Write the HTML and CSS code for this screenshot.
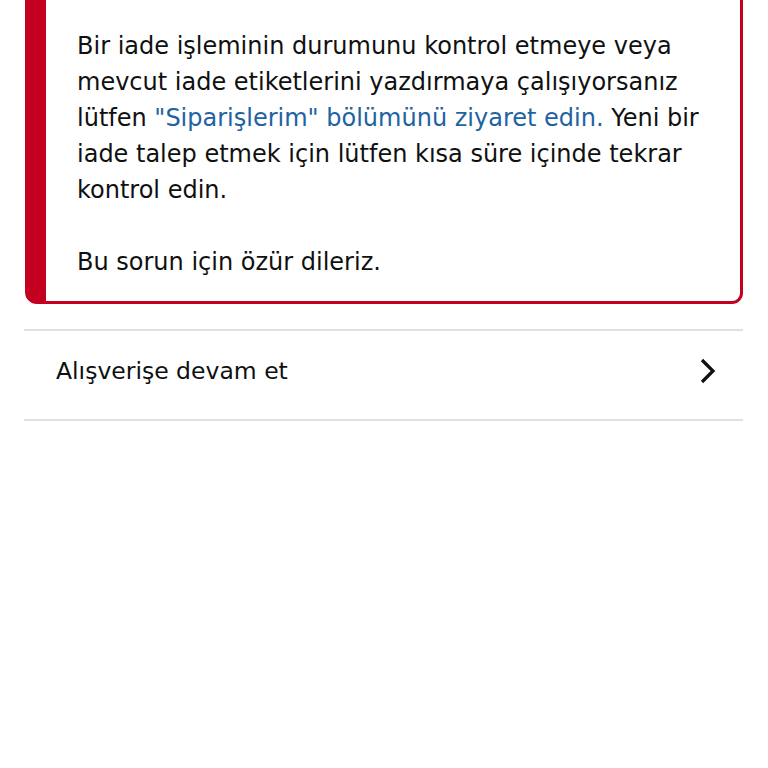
FILE: index.html
```html
<!DOCTYPE html>
<html lang="tr">
<head>
<meta charset="utf-8">
<link rel="stylesheet" href="styles.css">
</head>
<body>
<div class="page">
  <div class="alert">
    <p class="alert-text">Bir iade işleminin durumunu kontrol etmeye veya mevcut iade etiketlerini yazdırmaya çalışıyorsanız lütfen <a class="link" href="#">"Siparişlerim" bölümünü ziyaret edin.</a> Yeni bir iade talep etmek için lütfen kısa süre içinde tekrar kontrol edin.</p>
    <p class="alert-text">Bu sorun için özür dileriz.</p>
  </div>
  <div class="list">
    <a class="row" href="#">
      <span class="row-label">Alışverişe devam et</span>
      <svg class="chevron" width="18" height="26" viewBox="0 0 18 26" aria-hidden="true">
        <path d="M3 2 L14 13 L3 24" fill="none" stroke="#0f1111" stroke-width="3.2" stroke-linecap="butt" stroke-linejoin="miter"/>
      </svg>
    </a>
  </div>
</div>
</body>
</html>
```
FILE: styles.css
```css
html, body {
  margin: 0;
  padding: 0;
  background: #ffffff;
}
body {
  font-family: "DejaVu Sans", "Liberation Sans", sans-serif;
  color: #0f1111;
  width: 768px;
  height: 768px;
  overflow: hidden;
}
.page {
  padding: 0 25px 0 24px;
}
.alert {
  margin-top: -20px;
  margin-left: 1px;
  border: 3px solid #c40021;
  border-left-width: 21px;
  border-radius: 0 0 11px 12px;
  padding: 45px 20px 21px 31px;
}
.alert-text {
  margin: 0 0 36px 0;
  font-size: 24px;
  line-height: 36px;
}
.alert-text:last-child {
  margin-bottom: 0;
}
.link {
  color: #2162a1;
  text-decoration: none;
}
.list {
  margin-top: 25px;
  border-top: 2px solid #dfe0e0;
  border-bottom: 2px solid #dfe0e0;
}
.row {
  display: flex;
  align-items: center;
  justify-content: space-between;
  height: 80px;
  padding: 0 26px 8px 32px;
  color: #0f1111;
  text-decoration: none;
}
.row-label {
  font-size: 23.5px;
  line-height: 30px;
}
.chevron {
  display: block;
}
```
